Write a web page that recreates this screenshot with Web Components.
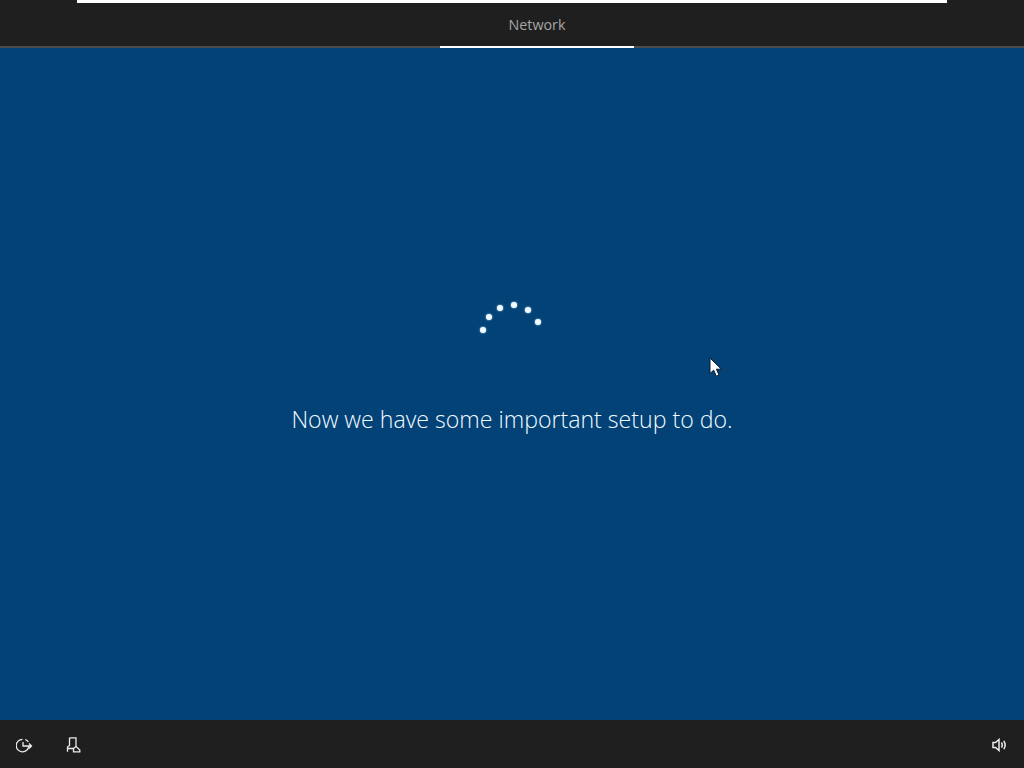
<!doctype html>
<html lang="en"><head><meta charset="utf-8"><title>Setup</title>
<style>
html,body{margin:0;height:100%;background:#024277}
body{width:1024px;height:768px;overflow:hidden;font-family:"Open Sans","Noto Sans","Liberation Sans",sans-serif}
</style></head><body>
<oobe-screen>
  <oobe-topbar slot="top"><oobe-tab>Network</oobe-tab></oobe-topbar>
  <oobe-status>Now we have some important setup to do.</oobe-status>
  <oobe-bottombar slot="bottom"></oobe-bottombar>
</oobe-screen>
<script>
function def(name, html){
  customElements.define(name, class extends HTMLElement{
    constructor(){super();this.attachShadow({mode:"open"}).innerHTML=html;}
  });
}
def("oobe-screen",`<style>
:host{display:flex;flex-direction:column;width:1024px;height:768px;position:relative;background:#024277}
main{flex:1;display:flex;flex-direction:column}
svg{position:absolute;left:708px;top:356px}
</style><slot name="top"></slot><main><slot></slot></main><slot name="bottom"></slot>
<svg width="15" height="22" viewBox="0 0 15 22"><path d="M2 2V17.500L5.700 14.200L8.300 20.200L11 19L8.400 13.200H13.400Z" fill="#fff" stroke="#0b1a28" stroke-width="1"/></svg>`);
def("oobe-topbar",`<style>
:host{display:block;height:48px;box-sizing:border-box;background:#1f1f1f;border-bottom:2px solid #4b4b4b}
.progress{height:3px;margin:0 77px;background:#fff}
.tabs{display:flex;justify-content:center;height:43px;padding-left:50px}
</style><div class="progress"></div><div class="tabs"><slot></slot></div>`);
def("oobe-tab",`<style>
:host{display:block;width:194px;height:43px;position:relative;
 text-align:center;font:14.300px/44px "Open Sans","Noto Sans",sans-serif;color:#a6a6a6}
:host::after{content:"";position:absolute;left:0;right:0;bottom:-2px;height:2px;background:#fff}
</style><slot></slot>`);
def("oobe-status",`<style>
:host{display:block;flex:1;position:relative;box-sizing:border-box;padding-top:354px;text-align:center;
 font:300 23.130px/34px "Open Sans","Noto Sans",sans-serif;color:#f4fbff}
i{position:absolute;width:6px;height:6px;border-radius:50%;background:#f2fbff;box-shadow:0 0 2px #bfe3ff}
</style>
<i style="left:480px;top:279px"></i><i style="left:486px;top:266px"></i><i style="left:497px;top:257px"></i>
<i style="left:511px;top:254px"></i><i style="left:525px;top:259px"></i><i style="left:535px;top:271px"></i>
<slot></slot>`);
def("oobe-bottombar",`<style>
:host{display:flex;align-items:center;height:48px;background:#1f1f1f;padding:1px 16px 0;box-sizing:border-box;color:#eee}
svg{display:block;fill:none;stroke:#ececec;stroke-width:1.300}
.sp{flex:1}
</style>
<svg width="17" height="16" viewBox="0 0 17 16"><path d="M6.500 2.300A6.300 6.300 0 1 0 12.800 9M7 5V9H15.500M13 6.500L15.500 9L13 11.500M9.300 2.500A6.300 6.300 0 0 1 12.300 5"/></svg>
<div style="width:33px"></div>
<svg width="15" height="16" viewBox="0 0 15 16"><path d="M3.500 .8H10V9.500L13.800 13V14.800H7.500V11.500H1.500V14.800M1.500 11.500V10L3.500 8.500V.8M7.500 11.500L10 9.500"/></svg>
<div class="sp"></div>
<svg width="16" height="14" viewBox="0 0 16 14" style="stroke-width:1.500"><path d="M1 4.500H3.500L7 1.500V12.500L3.500 9.500H1ZM9.500 4.500Q11 7 9.500 9.500M11.800 2.800Q14.500 7 11.800 11.200"/></svg>`);
</script>
</body></html>
